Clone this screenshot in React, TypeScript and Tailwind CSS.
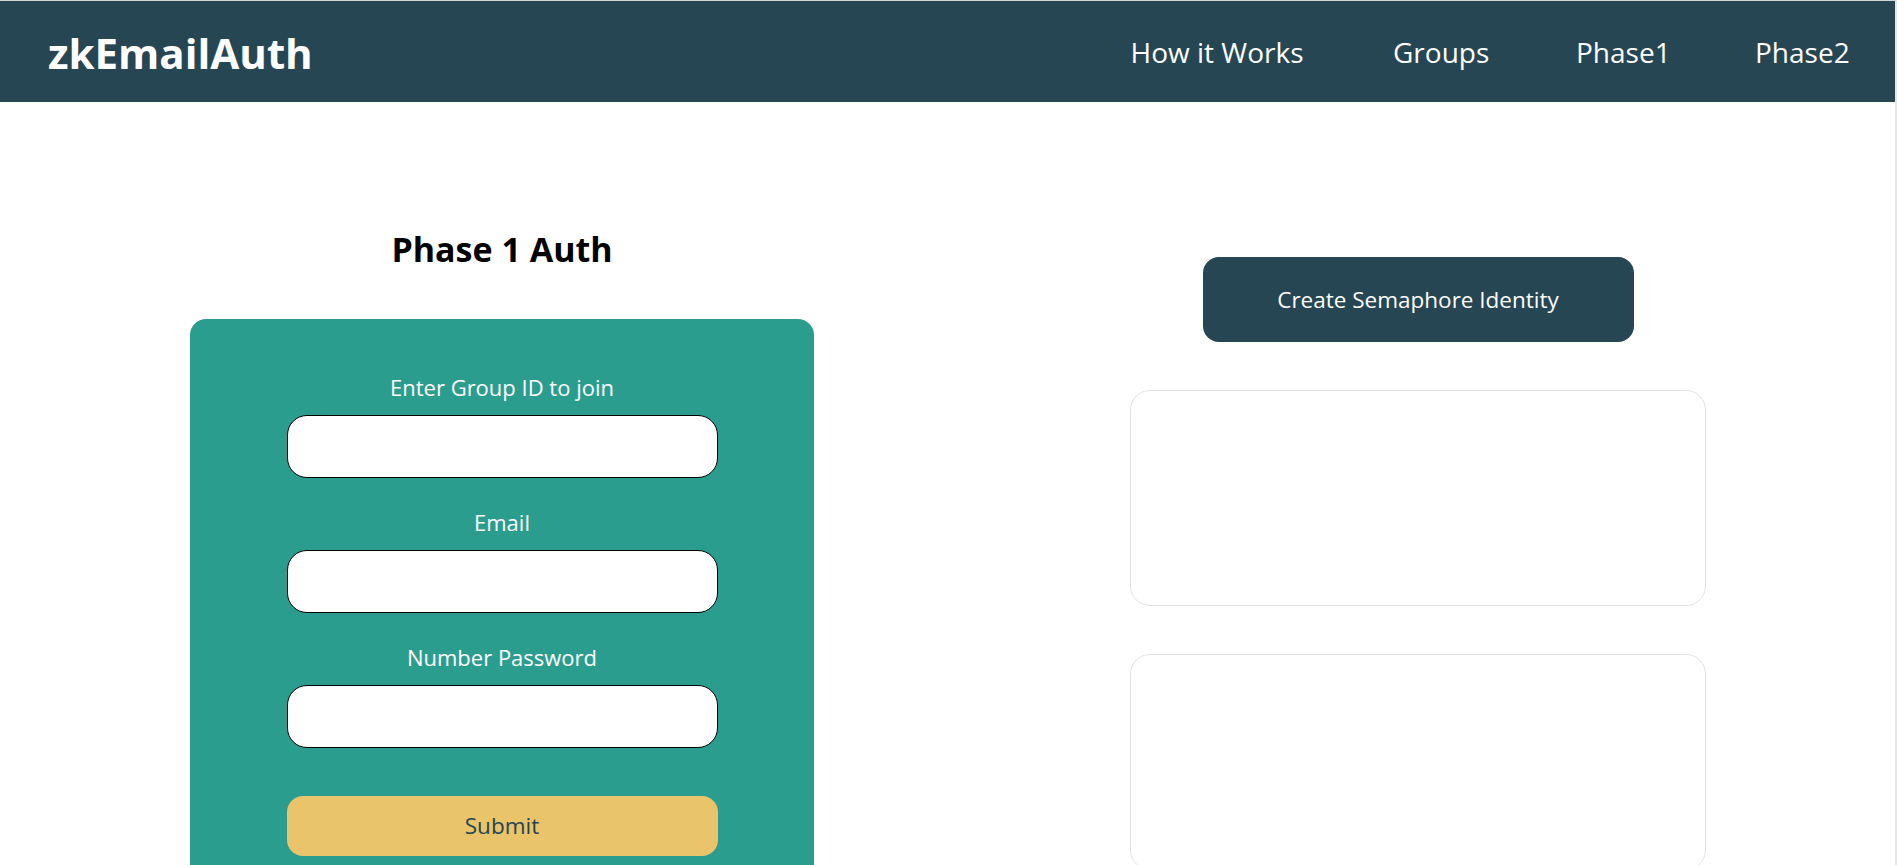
import React from "react";

const font = { fontFamily: '"Open Sans", "Noto Sans", sans-serif' };

function Field({ label }: { label: string }) {
  return (
    <div className="flex flex-col items-center">
      <label className="text-[22px] leading-[27px] text-white">{label}</label>
      <input
        className="mt-[14px] h-[63px] w-[431px] rounded-[20px] border border-black bg-white px-4 text-lg outline-none"
        type="text"
      />
    </div>
  );
}

export default function App() {
  return (
    <div className="h-[865px] w-full overflow-hidden border-t border-[#d6d6d6] bg-white" style={font}>
      <div className="flex h-full w-full">
        <div className="flex h-full w-[1895px] flex-col">
          <header className="flex h-[101px] shrink-0 items-center justify-between bg-[#264653] pl-[48px] pr-[48px]">
            <div className="pt-[2px] text-[42px] font-bold leading-none text-white">zkEmailAuth</div>
            <nav className="flex items-center gap-[88px] text-[28px] text-white">
              <a className="w-[176px] whitespace-nowrap text-center">How it Works</a>
              <a className="w-[95px] whitespace-nowrap text-center">Groups</a>
              <a className="w-[91px] whitespace-nowrap text-center">Phase1</a>
              <a className="w-[92px] whitespace-nowrap text-center">Phase2</a>
            </nav>
          </header>
          <main className="flex gap-[16px] pl-[52px]">
            <section className="flex w-[900px] flex-col items-center">
              <h1 className="mt-[126px] text-[34px] font-bold leading-[43px] text-black">Phase 1 Auth</h1>
              <div className="mt-[48px] flex w-[624px] flex-col items-center gap-[31px] rounded-[16px] bg-[#2a9d8f] pb-[40px] pt-[55px]">
                <Field label="Enter Group ID to join" />
                <Field label="Email" />
                <Field label="Number Password" />
                <button className="mt-[17px] h-[60px] w-[431px] rounded-[16px] bg-[#e9c46a] text-[22.5px] text-[#264653]">
                  Submit
                </button>
              </div>
            </section>
            <section className="flex w-[900px] flex-col items-center">
              <button className="mt-[155px] h-[85px] w-[431px] rounded-[16px] bg-[#264653] text-[22.5px] text-white">
                Create Semaphore Identity
              </button>
              <div className="mt-[48px] h-[216px] w-[576px] rounded-[20px] border border-[#e3e3e3]" />
              <div className="mt-[48px] h-[216px] w-[576px] shrink-0 rounded-[20px] border border-[#e3e3e3]" />
            </section>
          </main>
        </div>
        <div className="h-full w-[2px] bg-[#e6e6e6]" />
      </div>
    </div>
  );
}
